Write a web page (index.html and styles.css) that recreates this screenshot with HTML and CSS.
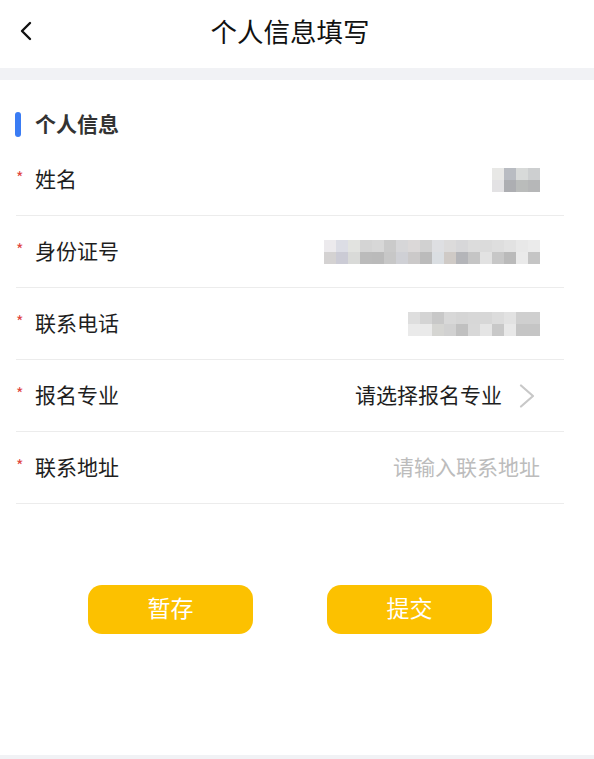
FILE: index.html
```html
<!DOCTYPE html>
<html lang="zh-CN">
<head>
<meta charset="utf-8">
<title>个人信息填写</title>
<link rel="stylesheet" href="styles.css">
</head>
<body>
<div class="page">
  <header class="nav">
    <span class="back">
      <svg width="14" height="20" viewBox="0 0 14 20"><path d="M11 2 L3 10 L11 18" fill="none" stroke="#111" stroke-width="2.4" stroke-linecap="round" stroke-linejoin="round"/></svg>
    </span>
    <h1 class="nav-title">个人信息填写</h1>
  </header>
  <div class="band"></div>
  <main class="content">
    <div class="section-title"><span class="bar"></span>个人信息</div>
    <div class="form">
      <div class="row">
        <span class="req">*</span><span class="label">姓名</span>
        <div class="value">
          <div class="mosaic cols4">
            <i style="background:#e8e8e6"></i><i style="background:#b9bcc2"></i><i style="background:#d8dad9"></i><i style="background:#cdcfd0"></i>
            <i style="background:#e3e2e4"></i><i style="background:#adaeb2"></i><i style="background:#babcbb"></i><i style="background:#b6b7b8"></i>
          </div>
        </div>
      </div>
      <div class="row">
        <span class="req">*</span><span class="label">身份证号</span>
        <div class="value">
          <div class="mosaic cols18">
            <i style="background:#eceaed"></i><i style="background:#dcdde5"></i><i style="background:#e2e3e0"></i><i style="background:#d4d4d4"></i><i style="background:#d7d7d7"></i><i style="background:#cacaca"></i><i style="background:#d6d6d8"></i><i style="background:#dbd8d8"></i><i style="background:#d1d1d1"></i><i style="background:#dedfe2"></i><i style="background:#dcdbdb"></i><i style="background:#d7d7d9"></i><i style="background:#dcdcdc"></i><i style="background:#dbdbdb"></i><i style="background:#dedede"></i><i style="background:#e2e2e2"></i><i style="background:#e8e8e8"></i><i style="background:#ebebeb"></i>
            <i style="background:#d4d2d2"></i><i style="background:#cbcbd5"></i><i style="background:#d9dad8"></i><i style="background:#bbbbbb"></i><i style="background:#bababa"></i><i style="background:#c7c7c7"></i><i style="background:#cfd0d5"></i><i style="background:#cbc9c9"></i><i style="background:#bbbbbb"></i><i style="background:#dadee2"></i><i style="background:#cfcac6"></i><i style="background:#b4b5b9"></i><i style="background:#c5c5c5"></i><i style="background:#e2e2e2"></i><i style="background:#c7c7c7"></i><i style="background:#bababa"></i><i style="background:#eaeaea"></i><i style="background:#c5c5c5"></i>
          </div>
        </div>
      </div>
      <div class="row">
        <span class="req">*</span><span class="label">联系电话</span>
        <div class="value">
          <div class="mosaic cols11">
            <i style="background:#dedede"></i><i style="background:#d4d4d4"></i><i style="background:#c8c8c8"></i><i style="background:#d8d8d8"></i><i style="background:#d5d5d5"></i><i style="background:#d7d7d7"></i><i style="background:#d7d7d7"></i><i style="background:#dcdcdc"></i><i style="background:#e2e2e2"></i><i style="background:#cfcfcf"></i><i style="background:#cfcfcf"></i>
            <i style="background:#eaeaea"></i><i style="background:#eaeaea"></i><i style="background:#d5d5d2"></i><i style="background:#d1d1d1"></i><i style="background:#c0c0c0"></i><i style="background:#d8d8d8"></i><i style="background:#e5e5e5"></i><i style="background:#c8c8c8"></i><i style="background:#e8e8e8"></i><i style="background:#c5c5c5"></i><i style="background:#c5c5c5"></i>
          </div>
        </div>
      </div>
      <div class="row">
        <span class="req">*</span><span class="label">报名专业</span>
        <div class="value select">
          <span class="select-text">请选择报名专业</span>
          <svg class="arrow" width="16" height="24" viewBox="0 0 16 24"><path d="M2 1.5 L14 12 L2 22.5" fill="none" stroke="#c8c8c8" stroke-width="2.2" stroke-linecap="round" stroke-linejoin="round"/></svg>
        </div>
      </div>
      <div class="row">
        <span class="req">*</span><span class="label">联系地址</span>
        <div class="value"><span class="placeholder">请输入联系地址</span></div>
      </div>
    </div>
    <div class="actions">
      <button class="btn">暂存</button>
      <button class="btn">提交</button>
    </div>
  </main>
  <div class="bottom-bar"></div>
</div>
</body>
</html>
```

FILE: styles.css
```css
* { box-sizing: border-box; }
html, body { margin: 0; padding: 0; background: #fff; }
body {
  font-family: "Noto Sans CJK SC", "Noto Sans", sans-serif;
  color: #222;
}
.page {
  min-height: 100vh;
  display: flex;
  flex-direction: column;
}
.nav {
  height: 68px;
  display: flex;
  align-items: center;
  justify-content: center;
  padding-right: 14px;
  position: relative;
}
.back {
  position: absolute;
  left: 19px;
  top: 21px;
  width: 14px;
  height: 20px;
  display: flex;
}
.nav-title {
  margin: 0;
  font-size: 26.5px;
  font-weight: 400;
  color: #111;
  line-height: 1;
  margin-top: -6px;
}
.band {
  height: 12px;
  background: #f1f2f5;
}
.content {
  flex: 1;
  display: flex;
  flex-direction: column;
}
.section-title {
  display: flex;
  align-items: center;
  gap: 14px;
  height: 28px;
  margin: 29px 0 7px 15px;
  font-size: 21px;
  font-weight: 700;
  color: #333;
}
.section-title .bar { margin-top: 2px; }
.bar {
  width: 6px;
  height: 25px;
  border-radius: 3px;
  background: #3a7cf4;
}
.form {
  padding: 0 30px 0 16px;
}
.row {
  height: 72px;
  display: flex;
  align-items: center;
  border-bottom: 1px solid #ececec;
  padding-right: 24px;
}
.req {
  color: #e0463f;
  font-size: 16px;
  width: 19px;
  margin-top: -5px;
}
.label {
  font-size: 21px;
  color: #1e1e1e;
  margin-top: -4px;
}
.value {
  margin-left: auto;
  display: flex;
  align-items: center;
}
.mosaic {
  display: grid;
  grid-auto-rows: 12px;
  grid-template-columns: repeat(var(--cols), 12px);
}
.mosaic i { display: block; }
.cols4 { --cols: 4; }
.cols18 { --cols: 18; }
.cols11 { --cols: 11; }
.select { gap: 17px; }
.select-text {
  font-size: 21px;
  color: #1e1e1e;
  margin-top: -4px;
}
.arrow { margin-right: 5px; }
.placeholder {
  font-size: 21px;
  color: #bcbcbc;
  margin-top: -4px;
}
.actions {
  display: flex;
  gap: 74px;
  padding: 81px 0 0 88px;
}
.btn {
  width: 165px;
  height: 49px;
  border: none;
  border-radius: 14px;
  background: #fcc100;
  color: #fff;
  font-family: "Noto Sans CJK SC", sans-serif;
  font-size: 23px;
  line-height: 1;
  padding: 0 0 4px;
}
.bottom-bar {
  height: 4px;
  background: #f1f2f5;
}
```
